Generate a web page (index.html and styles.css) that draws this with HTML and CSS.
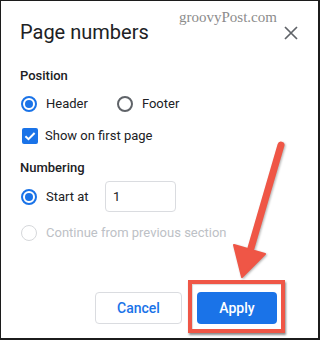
FILE: index.html
```html
<!DOCTYPE html>
<html>
<head>
<meta charset="utf-8">
<link rel="stylesheet" href="styles.css">
</head>
<body>
<div class="frame">
  <div class="watermark">groovyPost.com</div>
  <div class="title-row">
    <h1 class="title">Page numbers</h1>
    <svg class="close" width="14" height="14" viewBox="0 0 14 14"><path d="M1 1L13 13M13 1L1 13" stroke="#5f6368" stroke-width="1.7" fill="none"/></svg>
  </div>
  <div class="section-label label-position">Position</div>
  <div class="row row-position">
    <span class="radio checked"></span><span class="opt-text">Header</span>
    <span class="radio footer-radio"></span><span class="opt-text">Footer</span>
  </div>
  <div class="row row-check">
    <span class="checkbox"><svg width="16" height="16" viewBox="0 0 16 16"><path d="M3.4 8.2L6.5 11.2L12.6 5" stroke="#fff" stroke-width="2" fill="none"/></svg></span><span class="check-text">Show on first page</span>
  </div>
  <div class="section-label label-numbering">Numbering</div>
  <div class="row row-start">
    <span class="radio checked"></span><span class="opt-text start-text">Start at</span>
    <div class="num-input">1</div>
  </div>
  <div class="row row-continue">
    <span class="radio disabled"></span><span class="opt-text disabled-text">Continue from previous section</span>
  </div>
  <div class="actions">
    <button class="btn cancel">Cancel</button>
    <button class="btn apply">Apply</button>
  </div>
  <div class="highlight"></div>
  <svg class="arrow" width="320" height="340" viewBox="0 0 320 340">
    <line x1="281" y1="145" x2="251" y2="248" stroke="#ef5646" stroke-width="7" stroke-linecap="round"/>
    <polygon points="234,245 265,254 242,277" fill="#ef5646" stroke="#ef5646" stroke-width="2" stroke-linejoin="round"/>
  </svg>
</div>
</body>
</html>
```
FILE: styles.css
```css
html, body {
  margin: 0;
  padding: 0;
  background: #fff;
}
.frame {
  position: relative;
  width: 320px;
  height: 340px;
  box-sizing: border-box;
  border-style: solid;
  border-color: #1c1c1c;
  border-width: 1px 2px 2px 1px;
  padding: 19px 20px 0 19px;
  font-family: Roboto, "Liberation Sans", sans-serif;
  color: #202124;
  overflow: hidden;
}
.watermark {
  position: absolute;
  left: 178px;
  top: 7px;
  font-family: "Liberation Serif", serif;
  font-size: 15px;
  line-height: 18px;
  color: #8c8c8c;
}
.title-row {
  display: flex;
  justify-content: space-between;
  align-items: center;
  height: 24px;
}
.title {
  margin: 0;
  font-size: 20px;
  font-weight: 400;
  line-height: 24px;
  color: #202124;
}
.close {
  display: block;
  margin-top: 1px;
}
.section-label {
  font-size: 13px;
  font-weight: 500;
  line-height: 16px;
  height: 16px;
}
.label-position { margin-top: 24px; }
.label-numbering { margin-top: 14px; }
.row {
  display: flex;
  align-items: center;
  font-size: 13px;
  line-height: 20px;
}
.row-position { margin-top: 10px; height: 20px; }
.row-check { margin-top: 12px; height: 20px; }
.row-start { margin-top: 5px; height: 31px; }
.row-continue { margin-top: 11px; height: 20px; }
.radio {
  position: relative;
  width: 16px;
  height: 16px;
  box-sizing: border-box;
  border: 2px solid #5f6368;
  border-radius: 50%;
  margin-left: 1px;
  flex: none;
}
.radio.checked {
  border-color: #1a73e8;
}
.radio.checked::after {
  content: "";
  position: absolute;
  left: 2px;
  top: 2px;
  width: 8px;
  height: 8px;
  border-radius: 50%;
  background: #1a73e8;
}
.radio.disabled {
  border-color: #d6d8db;
  border-width: 1.5px;
}
.opt-text {
  margin-left: 9px;
}
.footer-radio {
  margin-left: 29px;
}
.checkbox {
  width: 16px;
  height: 16px;
  margin-left: 2px;
  border-radius: 2px;
  background: #1a73e8;
  flex: none;
}
.checkbox svg { display: block; }
.check-text { margin-left: 7px; }
.start-text {
  width: 59px;
}
.num-input {
  width: 71px;
  height: 31px;
  box-sizing: border-box;
  border: 1px solid #dadce0;
  border-radius: 4px;
  padding-left: 7px;
  line-height: 29px;
  font-size: 13px;
}
.disabled-text {
  color: #bdc1c6;
}
.actions {
  display: flex;
  justify-content: flex-end;
  gap: 15px;
  margin-top: 49px;
  padding-right: 21px;
}
.btn {
  height: 32px;
  box-sizing: border-box;
  border-radius: 4px;
  font-family: Roboto, "Liberation Sans", sans-serif;
  font-size: 14px;
  font-weight: 500;
  padding: 0;
  cursor: pointer;
}
.cancel {
  width: 87px;
  background: #fff;
  border: 1px solid #dadce0;
  color: #1a73e8;
}
.apply {
  width: 80px;
  background: #1a73e8;
  border: none;
  color: #fff;
}
.highlight {
  position: absolute;
  left: 187px;
  top: 279px;
  width: 97px;
  height: 53px;
  box-sizing: border-box;
  border: 4px solid #ef5646;
  box-shadow: 1px 2px 2px rgba(0, 0, 0, 0.45), inset 1px 1px 1px rgba(0, 0, 0, 0.15);
  pointer-events: none;
}
.arrow {
  position: absolute;
  left: -1px;
  top: -1px;
  pointer-events: none;
  filter: drop-shadow(1px 1px 1px rgba(0, 0, 0, 0.3));
}
```
